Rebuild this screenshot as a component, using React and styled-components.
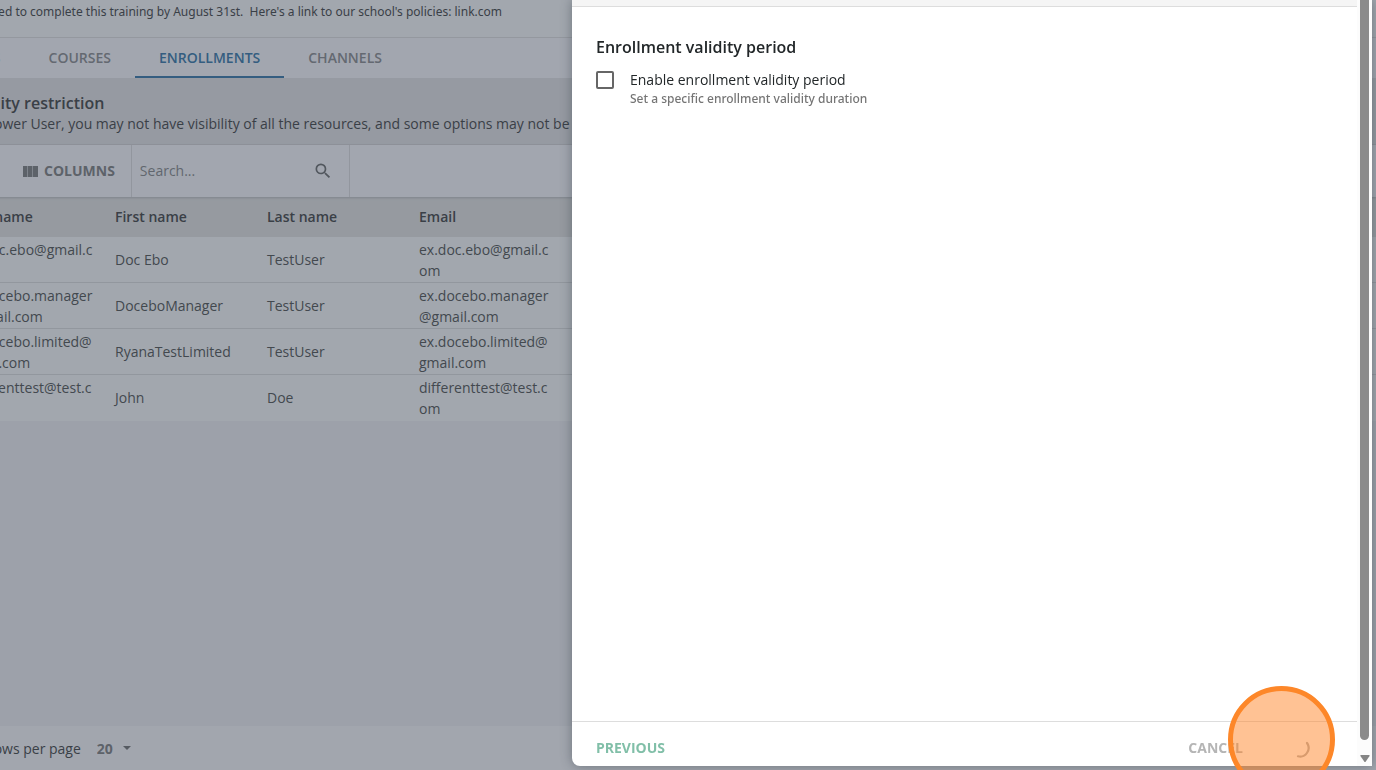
import React from "react";
import styled, { createGlobalStyle } from "styled-components";

const GlobalStyle = createGlobalStyle`
  * {
    box-sizing: border-box;
  }
  body {
    margin: 0;
    overflow: hidden;
    background: #9da1aa;
    color: #3a4047;
    font-family: "Open Sans", "Noto Sans", sans-serif;
    font-size: 14px;
    line-height: 21px;
  }
  button,
  input,
  select {
    font: inherit;
    color: inherit;
    border: 0;
    padding: 0;
    margin: 0;
    background: none;
  }
`;

const Page = styled.div`
  display: flex;
  flex-direction: column;
  min-height: 100vh;
  margin-left: -80px;
  white-space: nowrap;
`;

const Description = styled.p`
  display: flex;
  margin: 0;
  padding: 2px 0 15px;
  height: 38px;
  font-family: "Noto Sans", "Open Sans", sans-serif;
  font-size: 12px;
  line-height: 20px;
  white-space: pre;
  background: #a2a7ae;
  border-bottom: 1px solid #94989f;

  span {
    width: 582px;
    text-align: right;
  }
`;

const Tabs = styled.nav`
  display: flex;
  padding-left: 14px;
  background: #a2a6af;
`;

const Tab = styled.button`
  height: 40px;
  padding: 0 24px;
  font-weight: 600;
  color: ${(props) => (props.$active ? "#345d80" : "#646971")};
  border-bottom: 2px solid ${(props) => (props.$active ? "#345d80" : "transparent")};
`;

const Notice = styled.section`
  padding: 14px 0 10px 35px;
  background: #969aa2;
  border-bottom: 1px solid #8e9299;

  h2 {
    margin: 0;
    font-size: 16px;
    font-weight: 600;
    line-height: 22px;
  }
  p {
    margin: 0;
    line-height: 20px;
  }
`;

const Toolbar = styled.div`
  display: flex;
  height: 52px;
  background: #a2a6af;
  position: relative;
  box-shadow: 0 1px 2px #7f848b;
`;

const ColumnsButton = styled.button`
  display: flex;
  align-items: center;
  gap: 6px;
  padding: 0 16px 0 103px;
  line-height: 20px;
  font-weight: 700;
  color: #5d6269;
  border-right: 1px solid #92969e;
`;

const Search = styled.label`
  display: flex;
  align-items: center;
  width: 218px;
  padding: 0 16px 0 8px;
  color: #52575e;
  border-right: 1px solid #92969e;

  input {
    flex: 1;
    min-width: 0;
    padding-bottom: 2px;
    outline: none;
  }
  input::placeholder {
    color: #61666e;
    opacity: 1;
  }
`;

const Table = styled.table`
  width: 1456px;
  table-layout: fixed;
  border-collapse: separate;
  border-spacing: 0;
  text-align: left;
  white-space: normal;

  th {
    height: 40px;
    padding: 0 21px 2px 0;
    font-weight: 600;
    background: #969aa0;
  }
  td {
    height: 46px;
    padding: 2px 21px 1px 0;
    color: #43494f;
    background: #a2a7ae;
    border-bottom: 1px solid #92979e;
    overflow-wrap: anywhere;
  }
  th:first-child,
  td:first-child {
    padding-left: 43px;
  }
  tr:last-child td {
    border-bottom-color: #a2a7ae;
  }
`;

const NameCell = styled.td`
  && {
    padding-bottom: 3px;
  }
`;

const Pager = styled.footer`
  display: flex;
  align-items: center;
  height: 44px;
  margin-top: auto;
  padding-left: 65px;
  background: #a2a6ae;
`;

const PageSize = styled.label`
  display: flex;
  align-items: center;
  gap: 16px;

  select {
    appearance: none;
    width: 26px;
    font-weight: 700;
    color: #5d6269;
  }
  svg {
    margin-left: -16px;
  }
`;

const Panel = styled.aside`
  position: fixed;
  top: 0;
  right: 4px;
  bottom: 4px;
  display: flex;
  width: 800px;
  max-width: 100%;
  overflow: hidden;
  background: #fff;
  border-bottom-left-radius: 8px;
  color: #222729;
  box-shadow: 0 0 12px rgba(45, 55, 65, 0.45);
`;

const PanelMain = styled.div`
  flex: 1;
  display: flex;
  flex-direction: column;
`;

const PanelHeader = styled.header`
  height: 7px;
  background: #f5f5f5;
  border-bottom: 1px solid #dddddd;
`;

const PanelBody = styled.section`
  flex: 1;
  padding: 28px 24px;

  h2 {
    margin: 0 0 10px;
    font-size: 16px;
    font-weight: 600;
    line-height: 24px;
  }
`;

const Option = styled.label`
  display: flex;
  gap: 16px;

  input {
    appearance: none;
    width: 18px;
    height: 18px;
    margin: 2px 0 0;
    border: 2px solid #666;
    border-radius: 2px;
  }
  small {
    display: block;
    font-family: "Noto Sans", "Open Sans", sans-serif;
    font-size: 12px;
    font-weight: 500;
    line-height: 18px;
    color: #757575;
  }
`;

const PanelFooter = styled.footer`
  display: flex;
  align-items: center;
  padding: 16px 47px 8px 24px;
  border-top: 1px solid #dddddd;
`;

const Action = styled.button`
  height: 20px;
  line-height: 20px;
  font-weight: 700;
  color: ${(props) => (props.$primary ? "#81bfa8" : "#b5b5b5")};

  & + & {
    margin-left: auto;
  }
`;

const Loading = styled.button`
  height: 20px;
  margin-left: 47px;

  svg {
    display: block;
  }
`;

const Scrollbar = styled.div`
  display: flex;
  flex-direction: column;
  align-items: center;
  width: 15px;
  padding-bottom: 3px;
  background: #fcfcfc;
`;

const Thumb = styled.div`
  flex: 1;
  width: 9px;
  margin-bottom: 15px;
  background: #8b8b8b;
  border-radius: 0 0 5px 5px;
`;

const ClickMarker = styled.div`
  position: fixed;
  right: 41px;
  bottom: -23px;
  width: 107px;
  height: 107px;
  border: 5px solid #fd8729;
  border-radius: 50%;
  background: rgba(255, 133, 41, 0.5);
  pointer-events: none;
`;

const tabs = ["USERS", "COURSES", "ENROLLMENTS", "CHANNELS"];

const users = [
  { email: "ex.doc.ebo@gmail.com", first: "Doc Ebo", last: "TestUser" },
  { email: "ex.docebo.manager@gmail.com", first: "DoceboManager", last: "TestUser" },
  { email: "ex.docebo.limited@gmail.com", first: "RyanaTestLimited", last: "TestUser" },
  { email: "differenttest@test.com", first: "John", last: "Doe" },
];

const ColumnsIcon = () => (
  <svg width="15" height="11" viewBox="0 0 15 11" fill="currentColor">
    <path d="M0 0h4.5v11H0zM5 0h4.5v11H5zM10 0h5v11h-5z" />
  </svg>
);

const SearchIcon = () => (
  <svg width="20" height="20" viewBox="0 0 24 24" fill="currentColor">
    <path d="M15.5 14h-.79l-.28-.27A6.47 6.47 0 0 0 16 9.5 6.5 6.5 0 1 0 9.5 16c1.61 0 3.09-.59 4.23-1.57l.27.28v.79l5 4.99L20.49 19l-4.99-5zm-6 0C7.01 14 5 11.99 5 9.5S7.01 5 9.5 5 14 7.01 14 9.5 11.99 14 9.5 14z" />
  </svg>
);

const UserTable = () => (
  <Table>
    <colgroup>
      <col style={{ width: 195 }} />
      <col style={{ width: 152 }} />
      <col style={{ width: 152 }} />
      <col style={{ width: 152 }} />
      <col />
    </colgroup>
    <thead>
      <tr>
        <th>Username</th>
        <th>First name</th>
        <th>Last name</th>
        <th>Email</th>
        <th />
      </tr>
    </thead>
    <tbody>
      {users.map((user) => (
        <tr key={user.email}>
          <td>{user.email}</td>
          <NameCell>{user.first}</NameCell>
          <NameCell>{user.last}</NameCell>
          <td>{user.email}</td>
          <td />
        </tr>
      ))}
    </tbody>
  </Table>
);

const EnrollPanel = () => (
  <Panel>
    <PanelMain>
      <PanelHeader />
      <PanelBody>
        <h2>Enrollment validity period</h2>
        <Option>
          <input type="checkbox" />
          <span>
            Enable enrollment validity period
            <small>Set a specific enrollment validity duration</small>
          </span>
        </Option>
      </PanelBody>
      <PanelFooter>
        <Action $primary>PREVIOUS</Action>
        <Action>CANCEL</Action>
        <Loading aria-label="Loading">
          <svg width="20" height="20" viewBox="0 0 20 20" fill="none">
            <path
              d="M17 5A8.6 8.6 0 0 1 8 18.3"
              stroke="#b0b0b0"
              strokeWidth="2.2"
              strokeLinecap="round"
            />
          </svg>
        </Loading>
      </PanelFooter>
    </PanelMain>
    <Scrollbar>
      <Thumb />
      <svg width="10" height="8" viewBox="0 0 10 8" fill="#858585">
        <path d="M1 0h8q1 0 .6 1L5.8 6.6q-.8 1-1.6 0L.4 1Q0 0 1 0z" />
      </svg>
    </Scrollbar>
  </Panel>
);

const App = () => {
  return (
    <>
      <GlobalStyle />
      <Page>
        <Description>
          <span>
            {"required to complete this training by August 31st.  Here's a link to our school's policies: link.com"}
          </span>
        </Description>
        <Tabs>
          {tabs.map((tab) => (
            <Tab key={tab} $active={tab === "ENROLLMENTS"}>
              {tab}
            </Tab>
          ))}
        </Tabs>
        <Notice>
          <h2>Visibility restriction</h2>
          <p>
            As a Power User, you may not have visibility of all the resources, and some options may not be
          </p>
        </Notice>
        <Toolbar>
          <ColumnsButton>
            <ColumnsIcon />
            COLUMNS
          </ColumnsButton>
          <Search>
            <input type="text" placeholder="Search..." aria-label="Search" />
            <SearchIcon />
          </Search>
        </Toolbar>
        <UserTable />
        <Pager>
          <PageSize>
            Rows per page
            <select defaultValue="20">
              <option>20</option>
            </select>
            <svg width="8" height="4" viewBox="0 0 8 4" fill="#565b62">
              <path d="M0 0h8L4 4z" />
            </svg>
          </PageSize>
        </Pager>
      </Page>
      <EnrollPanel />
      <ClickMarker />
    </>
  );
};

export default App;
